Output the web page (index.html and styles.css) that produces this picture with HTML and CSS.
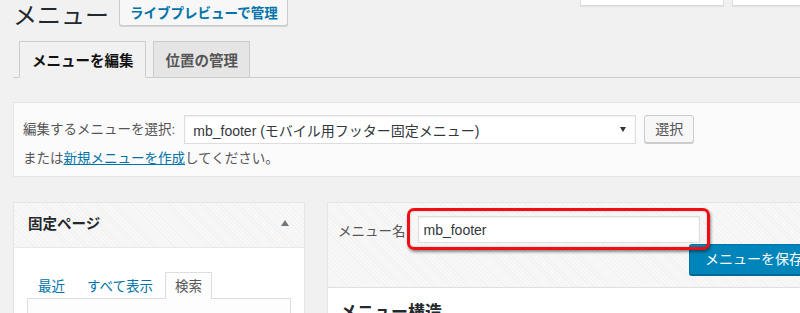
FILE: index.html
```html
<!DOCTYPE html>
<html lang="ja">
<head>
<meta charset="utf-8">
<title>メニュー</title>
<link rel="stylesheet" href="styles.css">
</head>
<body>
<div class="wrap">
  <div class="title-row">
    <h1 class="page-title">メニュー</h1>
    <a class="title-action">ライブプレビューで管理</a>
    <div class="screen-meta">
      <span class="meta-tab meta-tab-wide"></span>
      <span class="meta-tab meta-tab-narrow"></span>
    </div>
  </div>

  <nav class="nav-tabs">
    <a class="nav-tab nav-tab-active">メニューを編集</a>
    <a class="nav-tab">位置の管理</a>
  </nav>

  <div class="manage-menus">
    <div class="select-row">
      <span class="select-label">編集するメニューを選択:</span>
      <div class="fake-select">
        <span class="fake-select-text">mb_footer (モバイル用フッター固定メニュー)</span>
        <span class="fake-select-arrow"></span>
      </div>
      <span class="btn">選択</span>
    </div>
    <p class="create-row">または<a class="link">新規メニューを作成</a>してください。</p>
  </div>

  <div class="columns">
    <section class="side-box">
      <header class="side-head">
        <h3 class="side-title">固定ページ</h3>
        <span class="toggle-arrow"></span>
      </header>
      <div class="side-body">
        <ul class="side-tabs">
          <li class="side-tab"><a class="link-plain">最近</a></li>
          <li class="side-tab"><a class="link-plain">すべて表示</a></li>
          <li class="side-tab side-tab-active">検索</li>
        </ul>
        <div class="side-panel"></div>
      </div>
    </section>

    <section class="menu-edit">
      <div class="menu-head">
        <div class="name-row">
          <label class="name-label">メニュー名</label>
          <input class="name-input" type="text" value="mb_footer">
        </div>
        <div class="save-row">
          <span class="btn-primary">メニューを保存</span>
        </div>
        <div class="highlight"></div>
      </div>
      <div class="menu-body">
        <h3 class="menu-structure">メニュー構造</h3>
      </div>
    </section>
  </div>
</div>
</body>
</html>
```

FILE: styles.css
```css
* { box-sizing: border-box; }

html, body {
  margin: 0;
  padding: 0;
  height: 313px;
  overflow: hidden;
  background: #f1f1f1;
}

body {
  font-family: "Liberation Sans", "Noto Sans CJK JP", sans-serif;
  color: #444;
  font-size: 13.5px;
}

.wrap {
  width: 845px;
  padding: 0 15px 0 13px;
}

/* title row */
.title-row {
  display: flex;
  align-items: flex-start;
  height: 28px;
}

.page-title {
  margin: 0;
  font-size: 24px;
  line-height: 28px;
  font-weight: 400;
  color: #23282d;
  font-family: "Noto Sans CJK JP", sans-serif;
}

.title-action {
  margin-left: 10px;
  height: 26px;
  padding: 0 9px 0 10px;
  border: 1px solid #ccc;
  border-top: 0;
  border-radius: 0 0 3px 3px;
  background: #f7f7f7;
  box-shadow: 0 1px 0 #d4d4d4;
  color: #0073aa;
  font-size: 13.5px;
  line-height: 25px;
  font-weight: 700;
  font-family: "Noto Sans CJK JP", sans-serif;
  white-space: nowrap;
}

.screen-meta {
  margin-left: auto;
  display: flex;
  gap: 8px;
}

.meta-tab {
  display: block;
  height: 6px;
  background: #fff;
  border: 1px solid #ddd;
  border-top: 0;
  box-shadow: 0 1px 1px rgba(0,0,0,.06);
}
.meta-tab-wide { width: 144px; }
.meta-tab-narrow { width: 98px; }

/* nav tabs */
.nav-tabs {
  display: flex;
  gap: 7px;
  margin-top: 13px;
  padding-left: 6px;
  height: 37px;
  border-bottom: 1px solid #ccc;
}

.nav-tab {
  display: block;
  height: 37px;
  padding: 0 11px 0 12px;
  border: 1px solid #ccc;
  background: #e5e5e5;
  color: #555;
  font-size: 14.5px;
  font-weight: 700;
  line-height: 35px;
  font-family: "Noto Sans CJK JP", sans-serif;
  white-space: nowrap;
}

.nav-tab-active {
  background: #f1f1f1;
  border-bottom-color: #f1f1f1;
  color: #111;
}

/* manage menus */
.manage-menus {
  margin-top: 24px;
  padding: 12px 9px 8px;
  border: 1px solid #e5e5e5;
  background: #fbfbfb;
}

.select-row {
  display: flex;
  align-items: flex-start;
  height: 29px;
}

.select-label {
  line-height: 29px;
  color: #555;
  white-space: nowrap;
}

.fake-select {
  display: flex;
  align-items: center;
  width: 452px;
  height: 29px;
  margin-left: 9px;
  padding-left: 8px;
  border: 1px solid #ddd;
  background: #fff;
  box-shadow: inset 0 1px 2px rgba(0,0,0,.07);
}

.fake-select-text {
  flex: 1;
  font-size: 14px;
  color: #32373c;
  white-space: nowrap;
}

.fake-select-arrow {
  width: 0;
  height: 0;
  margin-right: 9px;
  border-left: 3px solid transparent;
  border-right: 3px solid transparent;
  border-top: 5px solid #333;
}

.btn {
  margin-left: 8px;
  height: 28px;
  padding: 0 10px;
  border: 1px solid #ccc;
  border-radius: 3px;
  background: #f7f7f7;
  box-shadow: 0 1px 0 #ccc;
  color: #555;
  font-size: 14px;
  line-height: 26px;
}

.create-row {
  margin: 6px 0 0;
  line-height: 18px;
  color: #555;
}

.link {
  color: #0073aa;
  text-decoration: underline;
}

/* columns */
.columns {
  display: flex;
  gap: 22px;
  margin-top: 25px;
  align-items: flex-start;
}

.side-box {
  width: 292px;
  flex: none;
  border: 1px solid #e5e5e5;
  background: #fff;
  box-shadow: 0 1px 1px rgba(0,0,0,.04);
}

.side-head {
  display: flex;
  align-items: center;
  justify-content: space-between;
  height: 45px;
  padding: 0 15px 4px 14px;
  border-bottom: 1px solid #e8e8e8;
  background: repeating-linear-gradient(45deg, #f8f8f8 0, #f8f8f8 2px, #f1f1f1 2px, #f1f1f1 3px);
}

.side-title {
  margin: 0;
  font-size: 14.5px;
  font-weight: 700;
  line-height: 20px;
  color: #23282d;
  font-family: "Noto Sans CJK JP", sans-serif;
}

.toggle-arrow {
  width: 0;
  height: 0;
  border-left: 4px solid transparent;
  border-right: 4px solid transparent;
  border-bottom: 6px solid #72777c;
}

.side-body {
  padding: 24px 13px 0;
}

.side-tabs {
  display: flex;
  gap: 2px;
  margin: 0;
  padding: 0 0 0 1px;
  list-style: none;
  height: 26px;
}

.side-tab {
  height: 27px;
  padding: 0 9px;
  line-height: 28px;
  border: 1px solid transparent;
  border-bottom: 0;
  white-space: nowrap;
}

.link-plain {
  color: #0073aa;
}

.side-tab-active {
  position: relative;
  z-index: 1;
  border-color: #ddd;
  background: #fdfdfd;
  color: #555;
}

.side-panel {
  height: 60px;
  border: 1px solid #ddd;
  background: #fdfdfd;
}

/* menu edit */
.menu-edit {
  flex: 1;
  border: 1px solid #e5e5e5;
  background: #fff;
  box-shadow: 0 1px 1px rgba(0,0,0,.04);
}

.menu-head {
  position: relative;
  padding: 13px 10px 12px;
  border-bottom: 1px solid #dfdfdf;
  background: repeating-linear-gradient(45deg, #f8f8f8 0, #f8f8f8 2px, #f1f1f1 2px, #f1f1f1 3px);
}

.name-row {
  display: flex;
  align-items: center;
  height: 27px;
}

.name-label {
  color: #555;
  font-size: 13.5px;
  white-space: nowrap;
}

.name-input {
  width: 282px;
  height: 27px;
  margin: 0 0 0 12px;
  padding: 0 5px;
  border: 1px solid #ddd;
  background: #fff;
  box-shadow: inset 0 1px 2px rgba(0,0,0,.07);
  font-family: "Liberation Sans", "Noto Sans CJK JP", sans-serif;
  font-size: 14px;
  color: #32373c;
  outline: none;
}

.save-row {
  display: flex;
  justify-content: flex-end;
  margin-top: 1px;
}

.btn-primary {
  height: 31px;
  padding: 0 15px;
  border: 1px solid #0073aa;
  border-bottom-color: #006799;
  border-radius: 3px;
  background: #0085ba;
  box-shadow: 0 1px 0 #006799;
  color: #fff;
  font-size: 14px;
  line-height: 29px;
  white-space: nowrap;
}

.highlight {
  position: absolute;
  left: 79px;
  top: 5px;
  width: 303px;
  height: 42px;
  border: 3px solid #f20d12;
  border-radius: 7px;
  box-shadow: 1px 2px 3px rgba(0,0,0,.45), inset 0 0 2px rgba(0,0,0,.25);
  z-index: 2;
}

.menu-body {
  padding: 12px 12px 0;
}

.menu-structure {
  margin: 0;
  font-size: 17px;
  line-height: 22px;
  font-weight: 700;
  color: #23282d;
  font-family: "Noto Sans CJK JP", sans-serif;
}
```
